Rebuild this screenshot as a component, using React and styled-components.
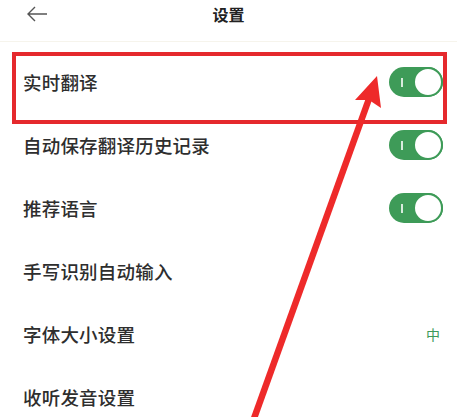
import React from 'react';
import styled, { createGlobalStyle } from 'styled-components';

const GlobalStyle = createGlobalStyle`
  html, body {
    margin: 0;
    padding: 0;
    background: #ffffff;
  }
  body {
    font-family: "Noto Sans CJK SC", "Noto Sans", sans-serif;
  }
`;

const Page = styled.div`
  position: relative;
  width: 457px;
  height: 417px;
  overflow: hidden;
  background: #ffffff;
`;

const Header = styled.div`
  display: grid;
  grid-template-columns: 60px 1fr 60px;
  align-items: center;
  height: 42px;
  border-bottom: 1px solid #f6f4ec;
  box-sizing: border-box;
  padding-bottom: 14px;
`;

const BackButton = styled.div`
  display: flex;
  align-items: center;
  padding-left: 26px;
  color: #555;
`;

const Title = styled.div`
  text-align: center;
  font-size: 16px;
  font-weight: 700;
  color: #222;
`;

const List = styled.div`
  display: flex;
  flex-direction: column;
  padding-top: 8px;
`;

const Row = styled.div`
  display: flex;
  align-items: center;
  justify-content: space-between;
  height: 63px;
  padding: 0 14px 0 23px;
`;

const Label = styled.span`
  font-size: 18.5px;
  font-weight: 500;
  color: #2e2e2e;
  letter-spacing: 0.2px;
`;

const Value = styled.span`
  font-size: 14px;
  color: #3c9a5a;
  margin-right: 3px;
`;

const Track = styled.div`
  position: relative;
  width: 54px;
  height: 30px;
  border-radius: 15px;
  background: ${p => (p.on ? '#3e9b58' : '#ccc')};
  display: flex;
  align-items: center;
  justify-content: ${p => (p.on ? 'flex-end' : 'flex-start')};
  box-sizing: border-box;
`;

const Mark = styled.div`
  position: absolute;
  left: 12px;
  top: 11px;
  width: 1.5px;
  height: 9px;
  background: rgba(255, 255, 255, 0.8);
`;

const Knob = styled.div`
  width: 26px;
  height: 26px;
  border-radius: 50%;
  background: #fff;
  border: 2px solid #3e9b58;
`;

const Highlight = styled.div`
  position: absolute;
  left: 12px;
  top: 52px;
  width: 435px;
  height: 72px;
  border: 4px solid #e5292d;
  box-sizing: border-box;
  pointer-events: none;
`;

const Overlay = styled.svg`
  position: absolute;
  left: 0;
  top: 0;
  pointer-events: none;
`;

const Toggle = ({ on }) => (
  <Track on={on}>
    <Mark />
    <Knob />
  </Track>
);

const rows = [
  { label: '实时翻译', toggle: true },
  { label: '自动保存翻译历史记录', toggle: true },
  { label: '推荐语言', toggle: true },
  { label: '手写识别自动输入' },
  { label: '字体大小设置', value: '中' },
  { label: '收听发音设置' },
];

const App = () => (
  <Page>
    <GlobalStyle />
    <Header>
      <BackButton>
        <svg width="22" height="16" viewBox="0 0 22 16" fill="none">
          <path d="M21 8H2M9 1L2 8l7 7" stroke="#555" strokeWidth="1.4" />
        </svg>
      </BackButton>
      <Title>设置</Title>
      <div />
    </Header>
    <List>
      {rows.map(r => (
        <Row key={r.label}>
          <Label>{r.label}</Label>
          {r.toggle && <Toggle on />}
          {r.value && <Value>{r.value}</Value>}
        </Row>
      ))}
    </List>
    <Highlight />
    <Overlay width="457" height="417" viewBox="0 0 457 417">
      <line x1="252" y1="424" x2="370" y2="96" stroke="#ee2a2a" strokeWidth="6.5" />
      <polygon points="377,76 381,108 369,100 355,100" fill="#ee2a2a" />
    </Overlay>
  </Page>
);

export default App;
